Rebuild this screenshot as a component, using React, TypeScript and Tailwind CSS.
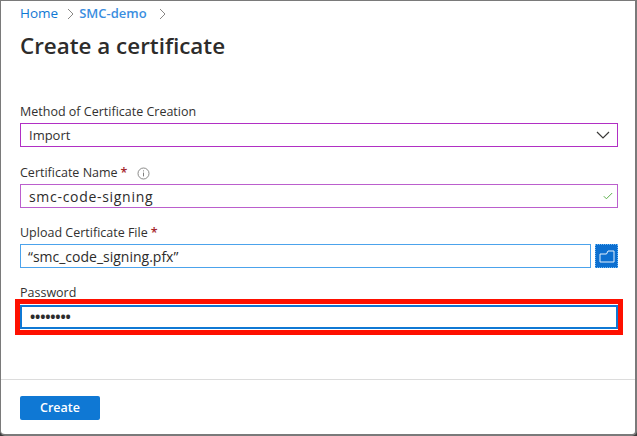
import React from 'react';

const font = "font-['Open_Sans','Noto_Sans',sans-serif]";

const Required: React.FC = () => <span className="ml-[3px] font-semibold text-[#a4262c]">*</span>;

const Chevron: React.FC<{ className?: string }> = ({ className }) => (
  <svg width="7" height="12" viewBox="0 0 7 12" fill="none" className={className}>
    <path d="M1 1l5 5-5 5" stroke="#8a8886" strokeWidth="1" />
  </svg>
);

const App: React.FC = () => {
  return (
    <div className="h-[436px] w-[637px] bg-[#3a3a3a]">
      <div className={`${font} flex h-full w-full flex-col overflow-hidden rounded-b-[5px] border-t border-r-2 border-b-2 border-l border-[#7a7a7a] bg-white text-[#323130]`}>
        <nav className="flex h-[25px] shrink-0 items-center pl-[19px] text-[13.5px]">
          <span className="text-[#0f78d4]">Home</span>
          <Chevron className="ml-[9px]" />
          <span className="ml-[5px] text-[13px] font-semibold text-[#3a8ee0]">SMC-demo</span>
          <Chevron className="ml-[12px]" />
        </nav>

        <h1 className="mt-[4px] pl-[19px] text-[22.4px] leading-[32px] font-semibold text-[#2d2c2b]">Create a certificate</h1>

        <main className="flex flex-1 flex-col pl-[19px] pr-[17px] pt-[28px] text-[12.5px]">
          <label className="flex h-[33px] items-end pb-[1px]">Method of Certificate Creation</label>
          <div className="flex h-[24px] items-center justify-between border-[1.5px] border-[#b12fc4] pl-[8px] pr-[7px] text-[13px]">
            <span className="pt-[1px]">Import</span>
            <svg width="14" height="8" viewBox="0 0 14 8" fill="none">
              <path d="M1 1l6 6 6-6" stroke="#3b3a39" strokeWidth="1.2" />
            </svg>
          </div>

          <label className="mt-[14px] flex h-[23px] items-center pt-[1px]">
            Certificate Name <Required />
            <svg width="13" height="13" viewBox="0 0 13 13" fill="none" className="ml-[10px]">
              <circle cx="6.5" cy="6.5" r="5.5" stroke="#6f6e6d" strokeWidth="0.8" />
              <path d="M6.5 5.6v3.8M6.5 3.4v1" stroke="#6f6e6d" strokeWidth="0.9" />
            </svg>
          </label>
          <div className="flex h-[24px] items-center justify-between border-[1.5px] border-[#bb5fcd] pl-[8px] pr-[4px] text-[14px]">
            <span className="font-medium tracking-[0.7px] text-[#2d2c2b]">smc-code-signing</span>
            <svg width="10" height="8" viewBox="0 0 10 8" fill="none">
              <path d="M0.8 4.2l2.6 2.6L9.2 1" stroke="#5db04a" strokeWidth="1" />
            </svg>
          </div>

          <label className="mt-[14px] flex h-[22px] items-center">
            Upload Certificate File <Required />
          </label>
          <div className="flex h-[24px] gap-[4px]">
            <div className="flex flex-1 items-center border-[1.5px] border-[#4ca3ec] pl-[7px] text-[14px] font-medium text-[#2d2c2b]">
              “smc_code_signing.pfx”
            </div>
            <button className="flex w-[23px] items-center justify-center bg-[#0c6fd0] outline-1 outline-dotted outline-[#6db8f5] -outline-offset-1">
              <svg width="16" height="13" viewBox="0 0 16 13" fill="none">
                <path d="M1 4v8h14V1H9L7.5 4H1z" stroke="#e4f1fc" strokeWidth="1" />
              </svg>
            </button>
          </div>

          <label className="mt-[14px] flex h-[23px] items-center">Password</label>
          <div className="relative flex h-[24px] items-center border-2 border-[#0f78d4] pl-[8px]">
            <span className="text-[14px] leading-none font-bold tracking-[-0.2px] text-[#2d2c2b]">••••••••</span>
            <div className="pointer-events-none absolute -top-[8px] -right-[7px] -bottom-[8px] -left-[7px] border-[5px] border-[#fe1000]" />
          </div>
        </main>

        <footer className="flex h-[55px] shrink-0 items-start border-t border-[#dcdcdc] pl-[19px] pt-[16px]">
          <button className="h-[24px] w-[80px] rounded-[2px] bg-[#0f78d4] text-[12.5px] font-semibold text-white">Create</button>
        </footer>
      </div>
    </div>
  );
};

export default App;
